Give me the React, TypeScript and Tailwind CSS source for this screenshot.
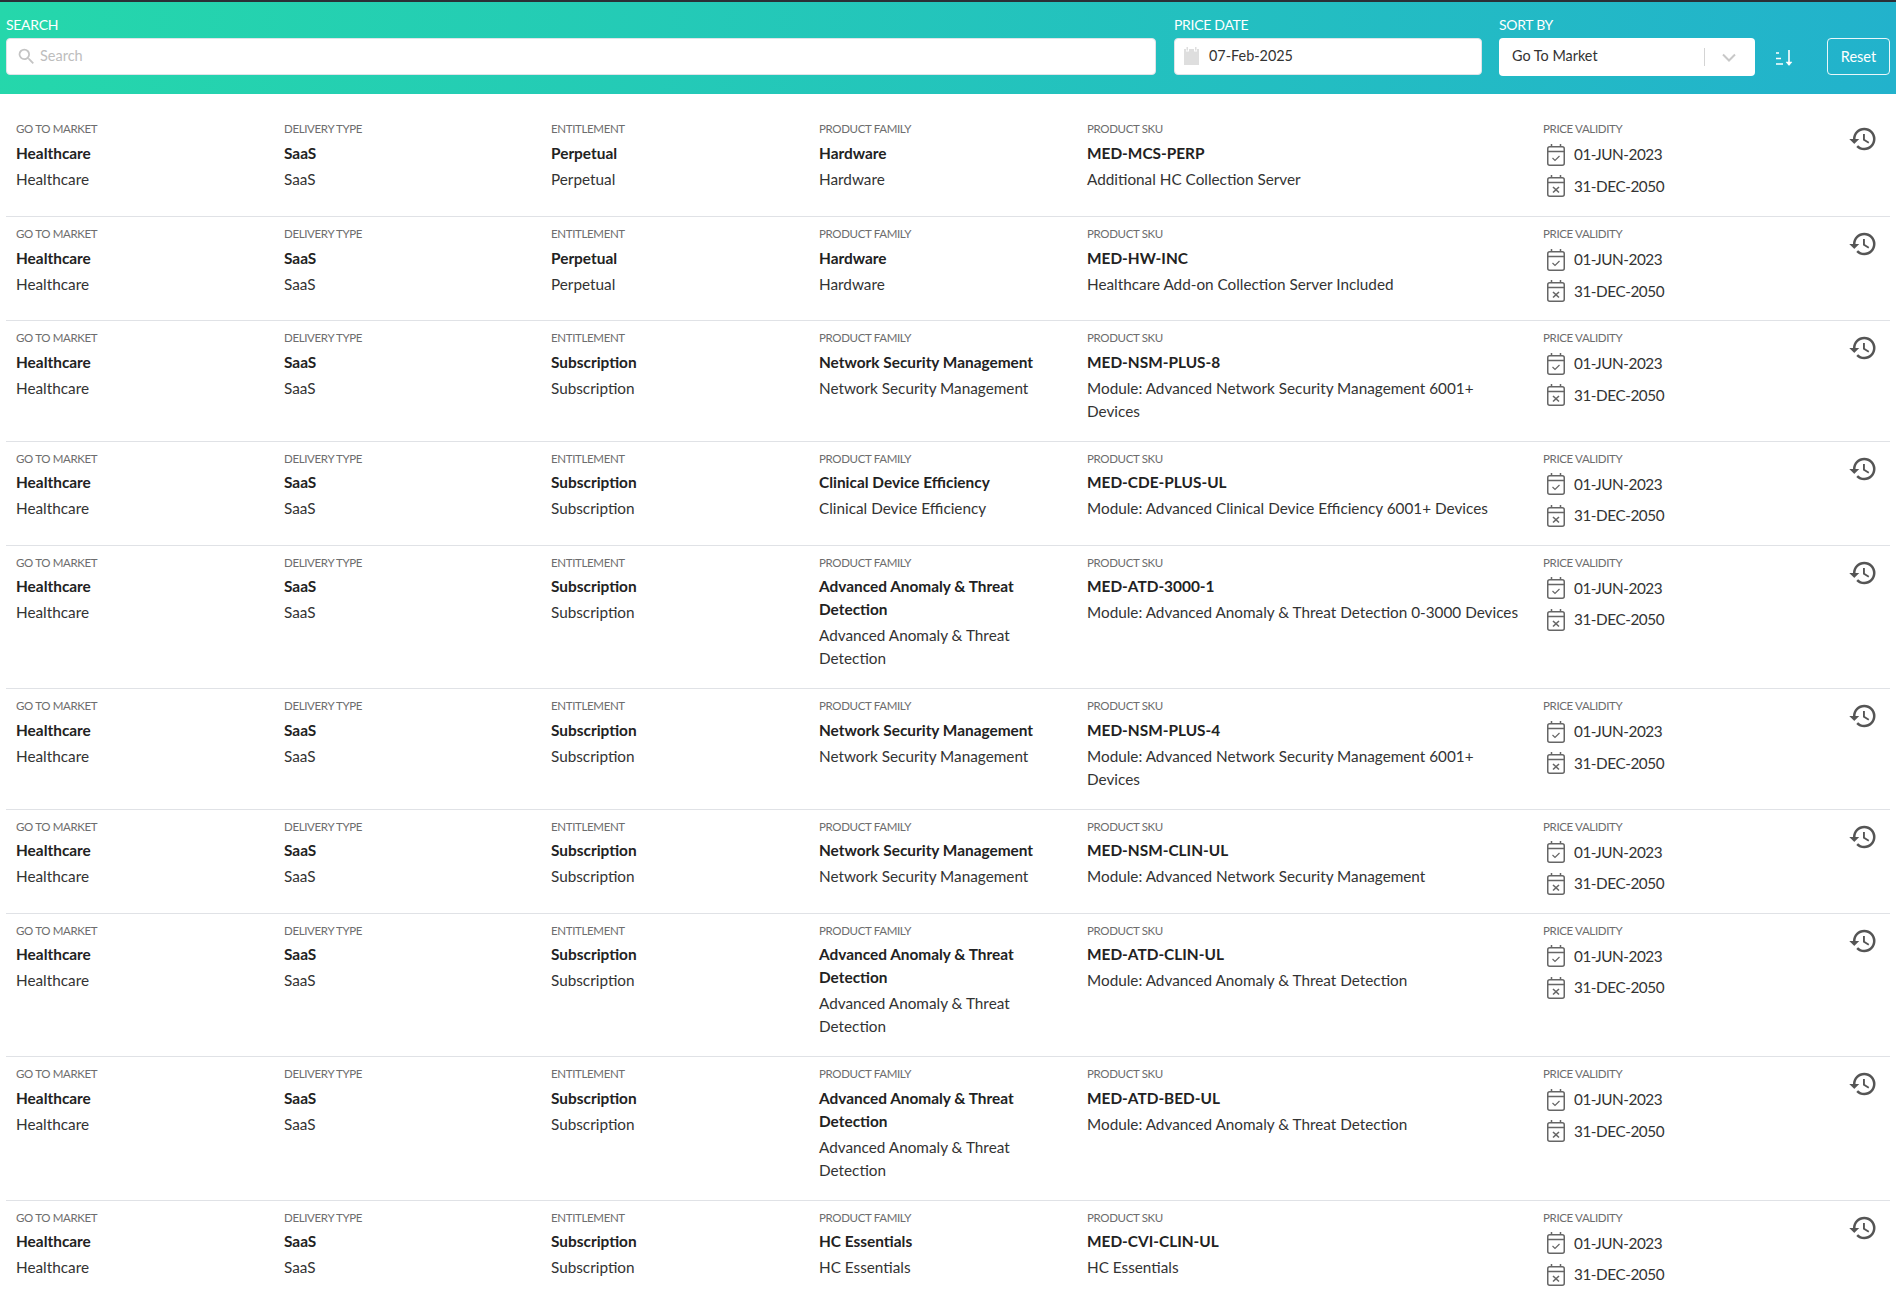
import { MdHistory, MdSearch } from "react-icons/md";

type Row = {
  entitlement: string;
  family: string;
  sku: string;
  desc: string;
};

const rows: Row[] = [
  { entitlement: "Perpetual", family: "Hardware", sku: "MED-MCS-PERP", desc: "Additional HC Collection Server" },
  { entitlement: "Perpetual", family: "Hardware", sku: "MED-HW-INC", desc: "Healthcare Add-on Collection Server Included" },
  { entitlement: "Subscription", family: "Network Security Management", sku: "MED-NSM-PLUS-8", desc: "Module: Advanced Network Security Management 6001+ Devices" },
  { entitlement: "Subscription", family: "Clinical Device Efficiency", sku: "MED-CDE-PLUS-UL", desc: "Module: Advanced Clinical Device Efficiency 6001+ Devices" },
  { entitlement: "Subscription", family: "Advanced Anomaly & Threat Detection", sku: "MED-ATD-3000-1", desc: "Module: Advanced Anomaly & Threat Detection 0-3000 Devices" },
  { entitlement: "Subscription", family: "Network Security Management", sku: "MED-NSM-PLUS-4", desc: "Module: Advanced Network Security Management 6001+ Devices" },
  { entitlement: "Subscription", family: "Network Security Management", sku: "MED-NSM-CLIN-UL", desc: "Module: Advanced Network Security Management" },
  { entitlement: "Subscription", family: "Advanced Anomaly & Threat Detection", sku: "MED-ATD-CLIN-UL", desc: "Module: Advanced Anomaly & Threat Detection" },
  { entitlement: "Subscription", family: "Advanced Anomaly & Threat Detection", sku: "MED-ATD-BED-UL", desc: "Module: Advanced Anomaly & Threat Detection" },
  { entitlement: "Subscription", family: "HC Essentials", sku: "MED-CVI-CLIN-UL", desc: "HC Essentials" },
];

const CalendarIcon = ({ kind }: { kind: "check" | "x" }) => (
  <svg width="20" height="24" viewBox="0 0 20 24" fill="none" stroke="#666" strokeWidth="1.5" className="shrink-0">
    <rect x="1.75" y="3.75" width="16.5" height="18.5" rx="2" />
    <path d="M5.5 1v3M14.5 1v3M2 8.5h16" />
    {kind === "check" ? (
      <path d="M6.5 15l2.5 2.5 4.5-4.5" strokeWidth="1.2" />
    ) : (
      <path d="M7 13l6 5.5M13 13l-6 5.5" strokeWidth="1.6" />
    )}
  </svg>
);

const Cell = ({ label, value, sub, width }: { label: string; value: string; sub: string; width: string }) => (
  <div className={`${width} shrink-0 pr-5 pb-[1px]`}>
    <div className="text-[11.5px] leading-[12px] text-[#6d6d6d] mb-[6.5px] tracking-[-0.35px]">{label}</div>
    <div className="text-[15.4px] leading-[23px] font-bold text-[#222]">{value}</div>
    <div className="text-[15.3px] leading-[23px] text-[#333] mt-[3px]">{sub}</div>
  </div>
);

const FilterLabel = ({ children }: { children: string }) => (
  <div className="text-[14px] leading-[14px] text-white mb-[6px] tracking-[-0.3px]">{children}</div>
);

export default function App() {
  return (
    <div className="min-h-[1302px] bg-white font-['Lato','Liberation_Sans',sans-serif] overflow-hidden">
      <div className="h-[94px] border-t-2 border-[#2b2f36] bg-[linear-gradient(95deg,#25d7ab,#22b2cc)] flex items-start pl-[6px] pr-[6px] pt-[16px]">
        <div className="w-[1150px]">
          <FilterLabel>SEARCH</FilterLabel>
          <div className="h-[37px] bg-white rounded border border-[#dfe3e8] flex items-center pl-[9px] pb-[1px] text-[14.5px] text-[#bdbdbd]">
            <MdSearch className="text-[#c4c4c4] mr-[3px]" size={21} />
            Search
          </div>
        </div>
        <div className="w-[308px] ml-[18px]">
          <FilterLabel>PRICE DATE</FilterLabel>
          <div className="h-[37px] bg-white rounded border border-[#dfe3e8] flex items-center pl-[9px] pb-[1px] text-[14.4px] text-[#333]">
            <svg width="15" height="18" viewBox="0 0 15 18" fill="#dedede" className="mr-[10px]">
              <path d="M2.5 0h1.5v3.5h-1.5zM11 0h1.5v3.5H11zM0 2h2v2.5h3V2h5v2.5h3V2h2v16H0z" />
            </svg>
            07-Feb-2025
          </div>
        </div>
        <div className="w-[256px] ml-[17px]">
          <FilterLabel>SORT BY</FilterLabel>
          <div className="h-[38px] bg-white rounded flex items-center pl-[13px] pr-[19px] pb-[2px] text-[14.4px] text-[#333]">
            <span className="flex-1">Go To Market</span>
            <span className="w-px h-[18px] bg-[#d4d4d4] mr-[17px] mt-[2px]" />
            <svg width="14" height="9" viewBox="0 0 14 9" fill="none" stroke="#c8c8c8" strokeWidth="2" className="mt-[2px]">
              <path d="M1 1.5l6 6 6-6" />
            </svg>
          </div>
        </div>
        <svg width="20" height="18" viewBox="0 0 20 18" fill="none" stroke="#fff" strokeWidth="1.6" className="ml-[20px] mt-[31px]">
          <path d="M1 4h3M1 9.5h5M1 15h7M14 1v15" />
          <path d="M11 13l3 3.5 3-3.5z" fill="#fff" strokeWidth="0.5" />
        </svg>
        <div className="ml-auto mt-[20px] w-[63px] h-[37px] rounded border border-white/90 flex items-center justify-center text-[14.5px] text-white">
          Reset
        </div>
      </div>

      <div className="pt-[19px] pl-[6px] pr-[6px]">
        {rows.map((r, i) => (
          <div
            key={r.sku}
            className={`flex pl-[10px] ${i > 0 ? "border-t border-[#e0e2e6] pt-[11px] pb-[17px]" : "pt-[10px] pb-[18px]"}`}
          >
            <Cell width="w-[268px]" label="GO TO MARKET" value="Healthcare" sub="Healthcare" />
            <Cell width="w-[267px]" label="DELIVERY TYPE" value="SaaS" sub="SaaS" />
            <Cell width="w-[268px]" label="ENTITLEMENT" value={r.entitlement} sub={r.entitlement} />
            <Cell width="w-[268px]" label="PRODUCT FAMILY" value={r.family} sub={r.family} />
            <Cell width="w-[456px]" label="PRODUCT SKU" value={r.sku} sub={r.desc} />
            <div className="w-[308px] shrink-0">
              <div className="text-[11.5px] leading-[12px] text-[#6d6d6d] mb-[7.5px] tracking-[-0.35px]">PRICE VALIDITY</div>
              <div className="flex flex-col gap-[7.5px] pl-[3px] text-[15.3px] tracking-[-0.45px] text-[#333]">
                <div className="flex items-center gap-[8px] h-[24px]">
                  <CalendarIcon kind="check" />
                  01-JUN-2023
                </div>
                <div className="flex items-center gap-[8px] h-[24px]">
                  <CalendarIcon kind="x" />
                  31-DEC-2050
                </div>
              </div>
            </div>
            <MdHistory size={30} className="text-[#555] -ml-[3px] mt-[1px] shrink-0" />
          </div>
        ))}
      </div>
    </div>
  );
}
